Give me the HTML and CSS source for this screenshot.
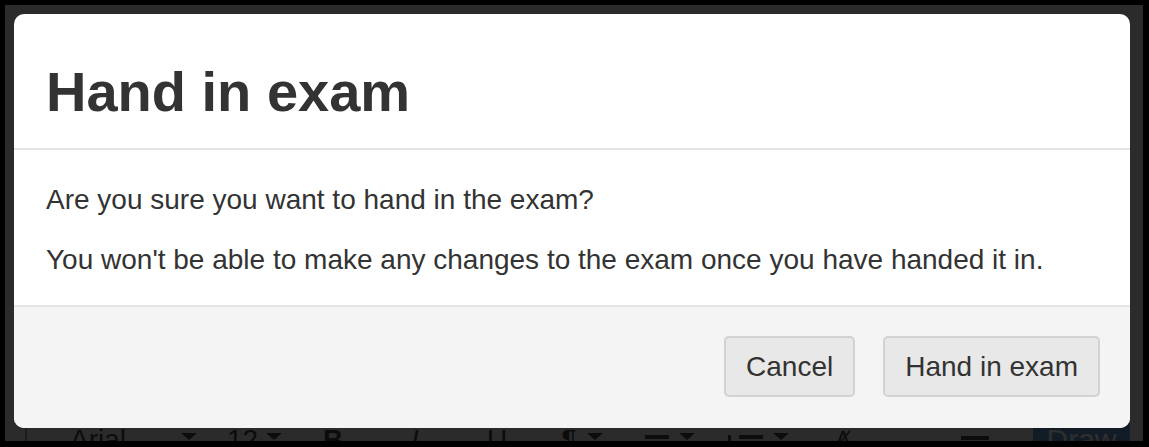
FILE: index.html
```html
<!DOCTYPE html>
<html lang="en">
<head>
  <meta charset="UTF-8">
  <meta name="viewport" content="width=device-width, initial-scale=1.0">
  <title>Hand in exam</title>
  <link rel="stylesheet" href="styles.css">
</head>
<body>
  <div class="screen">
    <div class="page-content"></div>

    <div class="toolbar">
      <span class="tb-sep"></span>
      <span class="tb-select font-select">Arial <span class="caret"></span></span>
      <span class="tb-select size-select">12 <span class="caret"></span></span>
      <span class="tb-btn bold">B</span>
      <span class="tb-btn italic">I</span>
      <span class="tb-btn underline">U</span>
      <span class="tb-btn drop">¶ <span class="caret"></span></span>
      <span class="tb-btn drop"><span class="bar"></span><span class="caret"></span></span>
      <span class="tb-btn drop"><span class="bar with-line"></span><span class="caret"></span></span>
      <span class="tb-btn clear">Ⱥ</span>
      <span class="tb-spacer"></span>
      <span class="tb-btn rule"><span class="bar wide"></span></span>
      <span class="tb-draw">Draw</span>
    </div>

    <div class="overlay">
      <div class="modal">
        <div class="modal-header">
          <h1>Hand in exam</h1>
        </div>
        <div class="modal-body">
          <p>Are you sure you want to hand in the exam?</p>
          <p>You won't be able to make any changes to the exam once you have handed it in.</p>
        </div>
        <div class="modal-footer">
          <button class="btn">Cancel</button>
          <button class="btn">Hand in exam</button>
        </div>
      </div>
    </div>
  </div>
</body>
</html>
```

FILE: styles.css
```css
html, body {
  margin: 0;
  padding: 0;
  background-color: #000;
}
body {
  font-family: "Liberation Sans", Arial, sans-serif;
  color: #333;
}
.screen {
  position: relative;
  margin: 5px 6px 0 5px;
  height: 436px;
  background-color: #eeeeee;
  overflow: hidden;
}
.page-content {
  height: 415px;
}

/* editor toolbar behind the dialog */
.toolbar {
  display: flex;
  height: 40px;
  font-size: 28px;
  line-height: 40px;
  color: #444;
}
.tb-sep {
  margin-left: 20px;
  border-left: 2px solid #999;
}
.tb-select {
  display: flex;
  justify-content: space-between;
  box-sizing: border-box;
  padding-right: 10px;
}
.font-select {
  width: 180px;
  padding-left: 43px;
}
.size-select {
  width: 85px;
  padding-left: 20px;
}
.caret {
  display: inline-block;
  width: 0;
  height: 0;
  margin-top: 13px;
  border-left: 8px solid transparent;
  border-right: 8px solid transparent;
  border-top: 7px solid #444;
}
.tb-btn {
  display: flex;
  justify-content: center;
  gap: 10px;
  width: 82px;
}
.bold { font-weight: bold; }
.italic { font-style: italic; }
.drop { width: 88px; }
.bar {
  display: inline-block;
  width: 24px;
  height: 4px;
  margin-top: 15px;
  background-color: #444;
}
.bar.with-line {
  border-left: 3px solid #444;
  padding-left: 8px;
  height: 25px;
  margin-top: 15px;
  background: linear-gradient(#444, #444) no-repeat right top / 24px 4px;
}
.bar.wide { width: 28px; margin-top: 16px; }
.clear {
  font-family: "DejaVu Sans", sans-serif;
  font-size: 22px;
}
.tb-spacer { flex: 1; }
.rule { width: 70px; margin-right: 23px; }
.tb-draw {
  width: 97px;
  margin-right: 13px;
  background-color: #5f9bd8;
  color: #fff;
  font-size: 30px;
  text-align: center;
}

/* dialog */
.overlay {
  position: absolute;
  top: 0;
  left: 0;
  right: 0;
  bottom: 0;
  padding: 9px 13px 0 9px;
  background-color: rgba(0, 0, 0, 0.82);
}
.modal {
  background-color: #fff;
  border-radius: 10px;
  overflow: hidden;
}
.modal-header {
  padding: 47px 30px 25px 32px;
  border-bottom: 2px solid #e5e5e5;
}
.modal-header h1 {
  margin: 0;
  font-size: 56px;
  line-height: 62px;
  font-weight: bold;
  color: #333;
}
.modal-body {
  padding: 30px 32px 25px;
  font-size: 28px;
  line-height: 40px;
}
.modal-body p {
  margin: 0 0 20px;
}
.modal-body p:last-child {
  margin-bottom: 0;
}
.modal-footer {
  display: flex;
  justify-content: flex-end;
  gap: 28px;
  padding: 29px 30px 31px;
  border-top: 2px solid #e5e5e5;
  background-color: #f4f4f4;
}
.btn {
  padding: 8px 20px;
  font-family: inherit;
  font-size: 28px;
  line-height: 41px;
  color: #333;
  background-color: #e8e8e8;
  border: 2px solid #d2d2d2;
  border-radius: 5px;
}
```
